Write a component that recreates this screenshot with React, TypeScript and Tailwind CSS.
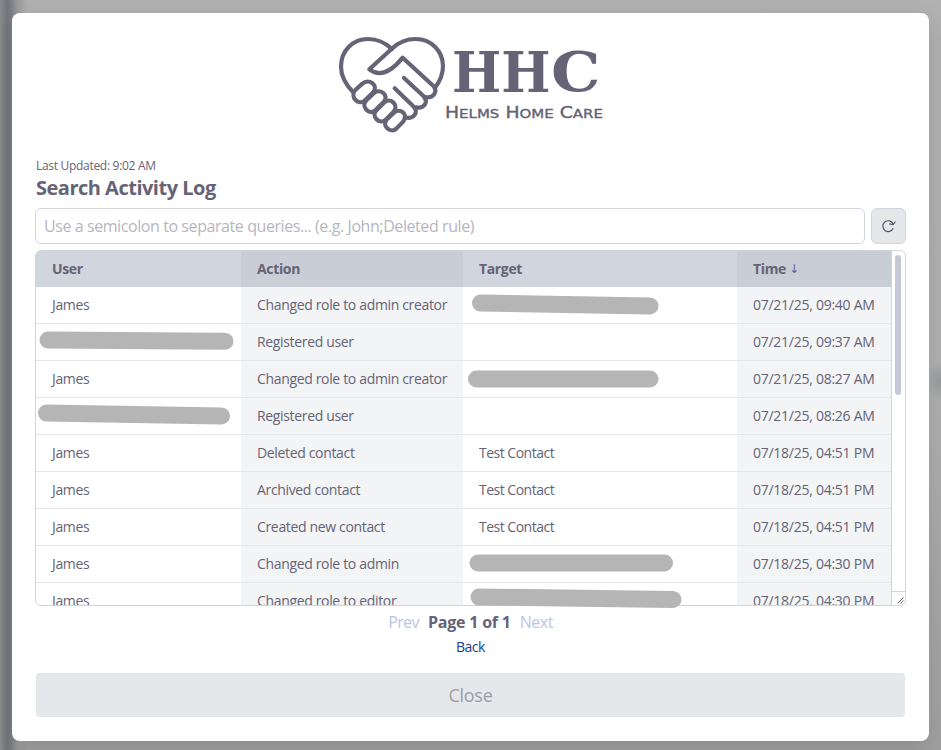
import React from "react";

type Row = { user?: string; action: string; target?: string; time: string };

const rows: Row[] = [
  { user: "James", action: "Changed role to admin creator", time: "07/21/25, 09:40 AM" },
  { action: "Registered user", time: "07/21/25, 09:37 AM" },
  { user: "James", action: "Changed role to admin creator", time: "07/21/25, 08:27 AM" },
  { action: "Registered user", time: "07/21/25, 08:26 AM" },
  { user: "James", action: "Deleted contact", target: "Test Contact", time: "07/18/25, 04:51 PM" },
  { user: "James", action: "Archived contact", target: "Test Contact", time: "07/18/25, 04:51 PM" },
  { user: "James", action: "Created new contact", target: "Test Contact", time: "07/18/25, 04:51 PM" },
  { user: "James", action: "Changed role to admin", time: "07/18/25, 04:30 PM" },
  { user: "James", action: "Changed role to editor", time: "07/18/25, 04:30 PM" },
];

// Marker strokes that hide private names: start and end points of each centre line.
const redactions = [
  [480.5, 303, 650, 306],
  [48, 340, 225, 341.2],
  [476.5, 379, 650, 379],
  [46.5, 413, 221.5, 416],
  [478, 563, 664.5, 563],
  [479, 597, 673, 599.5],
];

const grid = "grid grid-cols-[205px_222px_274px_154px]";

function Logo() {
  return (
    <svg className="block h-[115px] w-[280px]" viewBox="0 0 280 115" fill="none" aria-label="Helms Home Care">
      <g transform="scale(.33333)" stroke="#656375" strokeWidth="12.5" strokeLinecap="round" strokeLinejoin="round">
        <path d="M69 201C44 175 33 151 33 125C33 76 69 42 114 42C143 42 166 53 186 72" />
        <path d="M314 190C331 168 339 148 339 124C339 76 302 42 257 42C225 42 205 53 187 70L118 133C151 158 185 139 218 98L311 184C324 202 309 220 287 216" />
        <path d="M222 159L281 214C297 233 281 252 258 247" />
        <path d="M194 190L250 244C269 261 249 285 224 277" />
        <path d="M76 195L97 176C116 158 147 181 130 202L105 226C86 244 58 216 76 195Z" />
        <path d="M110 225L132 204C150 188 179 211 161 231L136 256C118 273 90 244 110 225Z" />
        <path d="M140 255L162 233C180 216 208 239 191 260L167 284C149 301 121 274 140 255Z" />
        <path d="M171 283L192 263C209 247 237 268 220 289L199 311C181 327 153 301 171 283Z" />
      </g>
      <g fill="#656375">
        <g className="font-['DejaVu_Serif',serif]" fontWeight="700">
          <text x="122" y="66.5" fontSize="56" textLength="98.5" lengthAdjust="spacingAndGlyphs">HH</text>
          <text x="221" y="66" fontSize="54" textLength="49.5" lengthAdjust="spacingAndGlyphs">C</text>
        </g>
        <text x="115" y="92.5" fontSize="15" stroke="#656375" strokeWidth=".35" textLength="158" lengthAdjust="spacingAndGlyphs" className="font-['DejaVu_Sans',sans-serif]">
          H<tspan fontSize="12">ELMS</tspan> H<tspan fontSize="12">OME</tspan> C<tspan fontSize="12">ARE</tspan>
        </text>
      </g>
    </svg>
  );
}

export default function App() {
  return (
    <div className="relative h-[750px] w-[941px] overflow-hidden bg-[linear-gradient(90deg,#8b8c8f_0px,#72757a_7px,#7c7e82_11px,#999_17px,transparent_28px),radial-gradient(ellipse_14px_20px_at_940px_381px,#989a9c,transparent),linear-gradient(#b1b1b1,#b0b0b0_50%,#a0a0a0)] pt-[13px] pl-3 font-['Open_Sans','Noto_Sans',sans-serif] text-[#656375]">
      <main className="flex h-[728px] w-[917px] flex-col rounded-lg bg-white px-[23px] pt-3 shadow-[0_8px_24px_rgba(0,0,0,0.13)]">
        <div className="flex h-[115px] justify-center pr-px"><Logo /></div>
        <div className="mt-[17px] ml-px h-[18px] text-[12px] leading-[18px] tracking-[-0.3px]">Last Updated: 9:02 AM</div>
        <h1 className="ml-px h-[33px] text-[20px] leading-[26px] font-bold tracking-[-0.5px]">Search Activity Log</h1>
        <div className="flex gap-1.5">
          <input className="h-9 w-[830px] rounded-md border border-[#d1d5db] px-2 text-[16px] tracking-[-0.42px] outline-none placeholder:text-[#b7b6be]" placeholder="Use a semicolon to separate queries... (e.g. John;Deleted rule)" />
          <button className="flex h-9 w-[35px] items-center justify-center rounded-md border border-[#d1d5db] bg-[#e5e7eb]">
            <svg className="size-4" viewBox="0 0 16 16" fill="none" stroke="#57566c">
              <path d="M12.1 5.8A5.4 5.4 0 1 0 12.2 10.3M8.2 5.9L12.1 6.6L14.5 3.5" strokeWidth="1.15" />
            </svg>
          </button>
        </div>
        <section className="mt-1.5 flex h-[356px] w-[871px] overflow-hidden rounded-md border border-[#d1d5db] text-[14px]">
          <div className="w-[855px] overflow-hidden">
            <div className={grid + " h-9 bg-[#d1d5dd] font-bold leading-9 tracking-[-0.35px]"}>
              <div className="pl-4">User</div>
              <div className="bg-[#c9cdd6] pl-4">Action</div>
              <div className="pl-4">Target</div>
              <div className="flex gap-[3px] bg-[#c9cdd6] pl-4"><span>Time</span><span className="font-['DejaVu_Sans',sans-serif] text-[12px] font-normal">↓</span></div>
            </div>
            {rows.map((r, i) => (
              <div key={i} className={grid + " h-[37px] border-b border-[#e5e7eb] leading-[36px] tracking-[-0.34px] whitespace-nowrap"}>
                <div className="pl-4">{r.user}</div>
                <div className="bg-[#f3f4f6] pl-4">{r.action}</div>
                <div className="pl-4 tracking-[-0.5px]">{r.target}</div>
                <div className="bg-[#f3f4f6] pl-4 tracking-[-0.26px]">{r.time}</div>
              </div>
            ))}
          </div>
          <div className="flex w-3.5 flex-col border-l border-[#d1d5db]">
            <div className="flex-1 pt-1 pl-[3px]"><div className="h-[140px] w-1.5 rounded-full bg-[#c5c9d3]" /></div>
            <div className="flex h-3.5 items-end justify-end border-t border-[#d1d5db] pr-px pb-px">
              <svg className="size-[7px]" viewBox="0 0 7 7" stroke="#555" strokeWidth=".9"><path d="M.5 6.5L6.5.5M3.5 6.5L6.5 3.5" /></svg>
            </div>
          </div>
        </section>
        <nav className="mt-0.5 flex h-7 items-center justify-center gap-[9px] text-[16px]">
          <span className="tracking-[-0.6px] text-[#bdc4e3]">Prev</span>
          <span className="font-bold tracking-[-0.2px]">Page 1 of 1</span>
          <span className="tracking-[-0.5px] text-[#bdc4e3]">Next</span>
        </nav>
        <div className="h-9 text-center text-[14px] leading-[22px] tracking-[-0.5px] text-[#1e3a8a]">Back</div>
        <button className="mt-px ml-px h-11 w-[869px] rounded bg-[#e5e7eb] text-[18px] tracking-[-0.3px] text-[#9c9da8]">Close</button>
      </main>
      <svg className="pointer-events-none absolute inset-0 h-[750px] w-[941px]" stroke="#b5b5b5" strokeWidth="17" strokeLinecap="round">
        {redactions.map(([x1, y1, x2, y2]) => <line key={y1} x1={x1} y1={y1} x2={x2} y2={y2} />)}
      </svg>
    </div>
  );
}
